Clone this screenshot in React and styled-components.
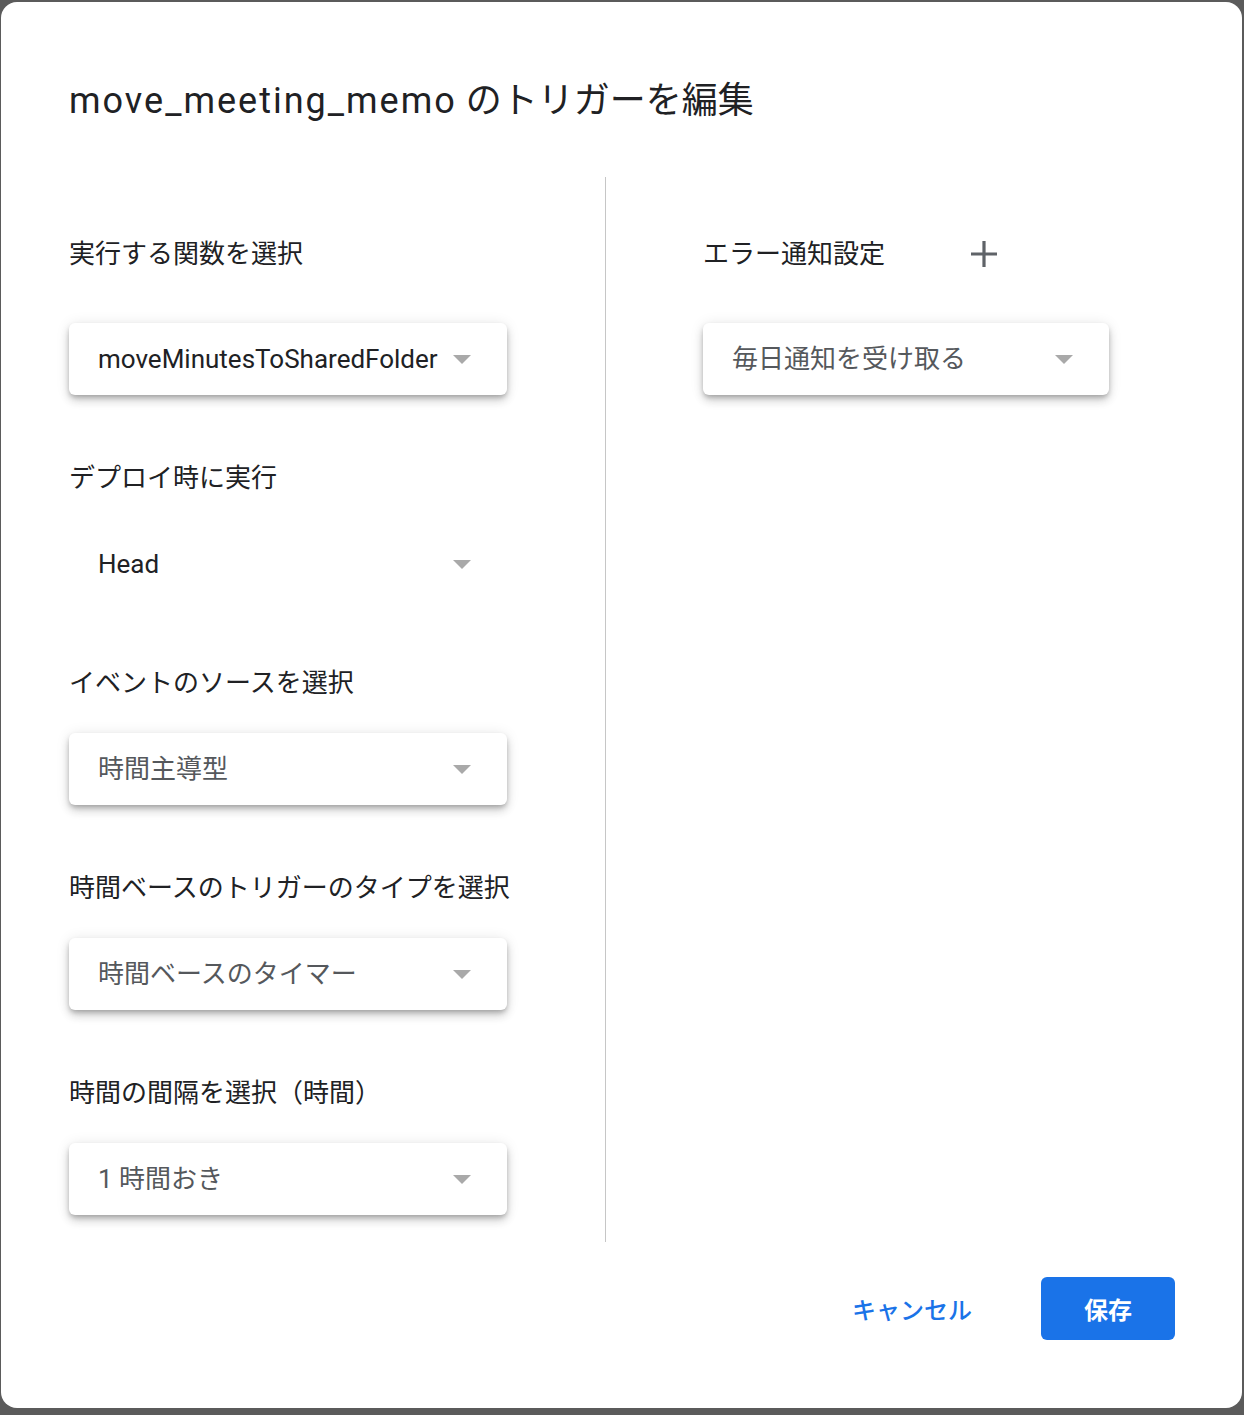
import React from 'react'
import styled, { createGlobalStyle } from 'styled-components'

const GlobalStyle = createGlobalStyle`
  html, body {
    margin: 0;
    padding: 0;
    background: #5b5b5b;
  }
  * {
    box-sizing: border-box;
  }
`;

const Page = styled.div`
  padding: 2px 2px 7px 1px;
  background: #5b5b5b;
  font-family: Roboto, "Noto Sans CJK JP", sans-serif;
  color: #202124;
`;

const Dialog = styled.div`
  background: #fff;
  border-radius: 16px;
  height: 1406px;
  padding: 75px 67px 68px 68px;
  display: flex;
  flex-direction: column;
`;

const Title = styled.h1`
  margin: 0;
  font-size: 36px;
  line-height: 48px;
  font-weight: 400;
  color: #202124;
`;

const TitleCode = styled.span`
  letter-spacing: 2px;
`;

const Body = styled.div`
  margin-top: 52px;
  display: flex;
  flex: 1;
`;

const Column = styled.div`
  display: flex;
  flex-direction: column;
  padding: 47px 0 27px ${({ $inset }) => $inset || 0}px;
  width: ${({ $width }) => ($width ? `${$width}px` : 'auto')};
  border-right: ${({ $divider }) => ($divider ? '1px solid #c6c6c6' : 'none')};
`;

const Field = styled.div`
  display: flex;
  flex-direction: column;
  margin-bottom: 64px;
  &:last-child {
    margin-bottom: 0;
  }
`;

const HeaderRow = styled.div`
  display: flex;
  align-items: center;
  height: 56px;
  margin-bottom: 43px;
  padding-top: 2px;
`;

const Label = styled.div`
  font-size: 26px;
  line-height: 36px;
  padding-top: 1px;
  height: 36px;
  color: #202124;
  margin-bottom: ${({ $inRow }) => ($inRow ? 0 : 33)}px;
`;

const IconButton = styled.button`
  width: 56px;
  height: 56px;
  margin-left: 71px;
  border: none;
  background: transparent;
  padding: 2px 0 0;
  display: flex;
  align-items: center;
  justify-content: center;
  cursor: pointer;
  color: #5f6368;
`;

const Select = styled.div`
  display: flex;
  align-items: center;
  width: ${({ $width }) => $width}px;
  height: 72px;
  padding: 0 36px 0 29px;
  border-radius: 6px;
  background: #fff;
  box-shadow: ${({ $flat }) =>
    $flat
      ? 'none'
      : '0 3px 5px -1px rgba(0,0,0,0.24), 0 6px 10px 0 rgba(0,0,0,0.14), 0 1px 14px 0 rgba(0,0,0,0.1)'};
`;

const SelectValue = styled.span`
  flex: 1;
  font-size: 26px;
  line-height: 36px;
  white-space: nowrap;
  margin-top: -1px;
  color: ${({ $muted }) => ($muted ? '#55585c' : '#202124')};
`;

const Arrow = styled.span`
  width: 0;
  height: 0;
  margin-left: 12px;
  border-left: 9.5px solid transparent;
  border-right: 9.5px solid transparent;
  border-top: 9px solid #a9a9a9;
`;

const Footer = styled.div`
  margin-top: 35px;
  display: flex;
  justify-content: flex-end;
  align-items: center;
  gap: 45px;
`;

const TextButton = styled.button`
  height: 63px;
  padding: 0 24px;
  border: none;
  background: transparent;
  font-family: Roboto, "Noto Sans CJK JP", sans-serif;
  font-size: 24px;
  font-weight: 500;
  color: #1a73e8;
  cursor: pointer;
`;

const PrimaryButton = styled.button`
  width: 134px;
  height: 63px;
  border: none;
  border-radius: 6px;
  background: #1a73e8;
  color: #fff;
  font-family: Roboto, "Noto Sans CJK JP", sans-serif;
  font-size: 24px;
  font-weight: 700;
  cursor: pointer;
`;

const PlusIcon = () => (
  <svg width="26" height="26" viewBox="0 0 26 26">
    <path d="M13 0v26M0 13h26" stroke="currentColor" strokeWidth="3.2" fill="none" />
  </svg>
);

const Dropdown = ({ value, width = 438, flat, muted }) => (
  <Select $width={width} $flat={flat}>
    <SelectValue $muted={muted}>{value}</SelectValue>
    <Arrow />
  </Select>
);

const fields = [
  { label: 'デプロイ時に実行', value: 'Head', flat: true },
  { label: 'イベントのソースを選択', value: '時間主導型', muted: true },
  { label: '時間ベースのトリガーのタイプを選択', value: '時間ベースのタイマー', muted: true },
  { label: '時間の間隔を選択（時間）', value: '1 時間おき', muted: true },
];

const App = () => {
  return (
    <Page>
      <GlobalStyle />
      <Dialog>
        <Title>
          <TitleCode>move_meeting_memo</TitleCode> のトリガーを編集
        </Title>
        <Body>
          <Column $width={537} $divider>
            <Field>
              <HeaderRow>
                <Label $inRow>実行する関数を選択</Label>
              </HeaderRow>
              <Dropdown value="moveMinutesToSharedFolder" />
            </Field>
            {fields.map((f) => (
              <Field key={f.label}>
                <Label>{f.label}</Label>
                <Dropdown value={f.value} flat={f.flat} muted={f.muted} />
              </Field>
            ))}
          </Column>
          <Column $inset={97}>
            <Field>
              <HeaderRow>
                <Label $inRow>エラー通知設定</Label>
                <IconButton aria-label="追加">
                  <PlusIcon />
                </IconButton>
              </HeaderRow>
              <Dropdown value="毎日通知を受け取る" width={406} muted />
            </Field>
          </Column>
        </Body>
        <Footer>
          <TextButton>キャンセル</TextButton>
          <PrimaryButton>保存</PrimaryButton>
        </Footer>
      </Dialog>
    </Page>
  )
}

export default App
